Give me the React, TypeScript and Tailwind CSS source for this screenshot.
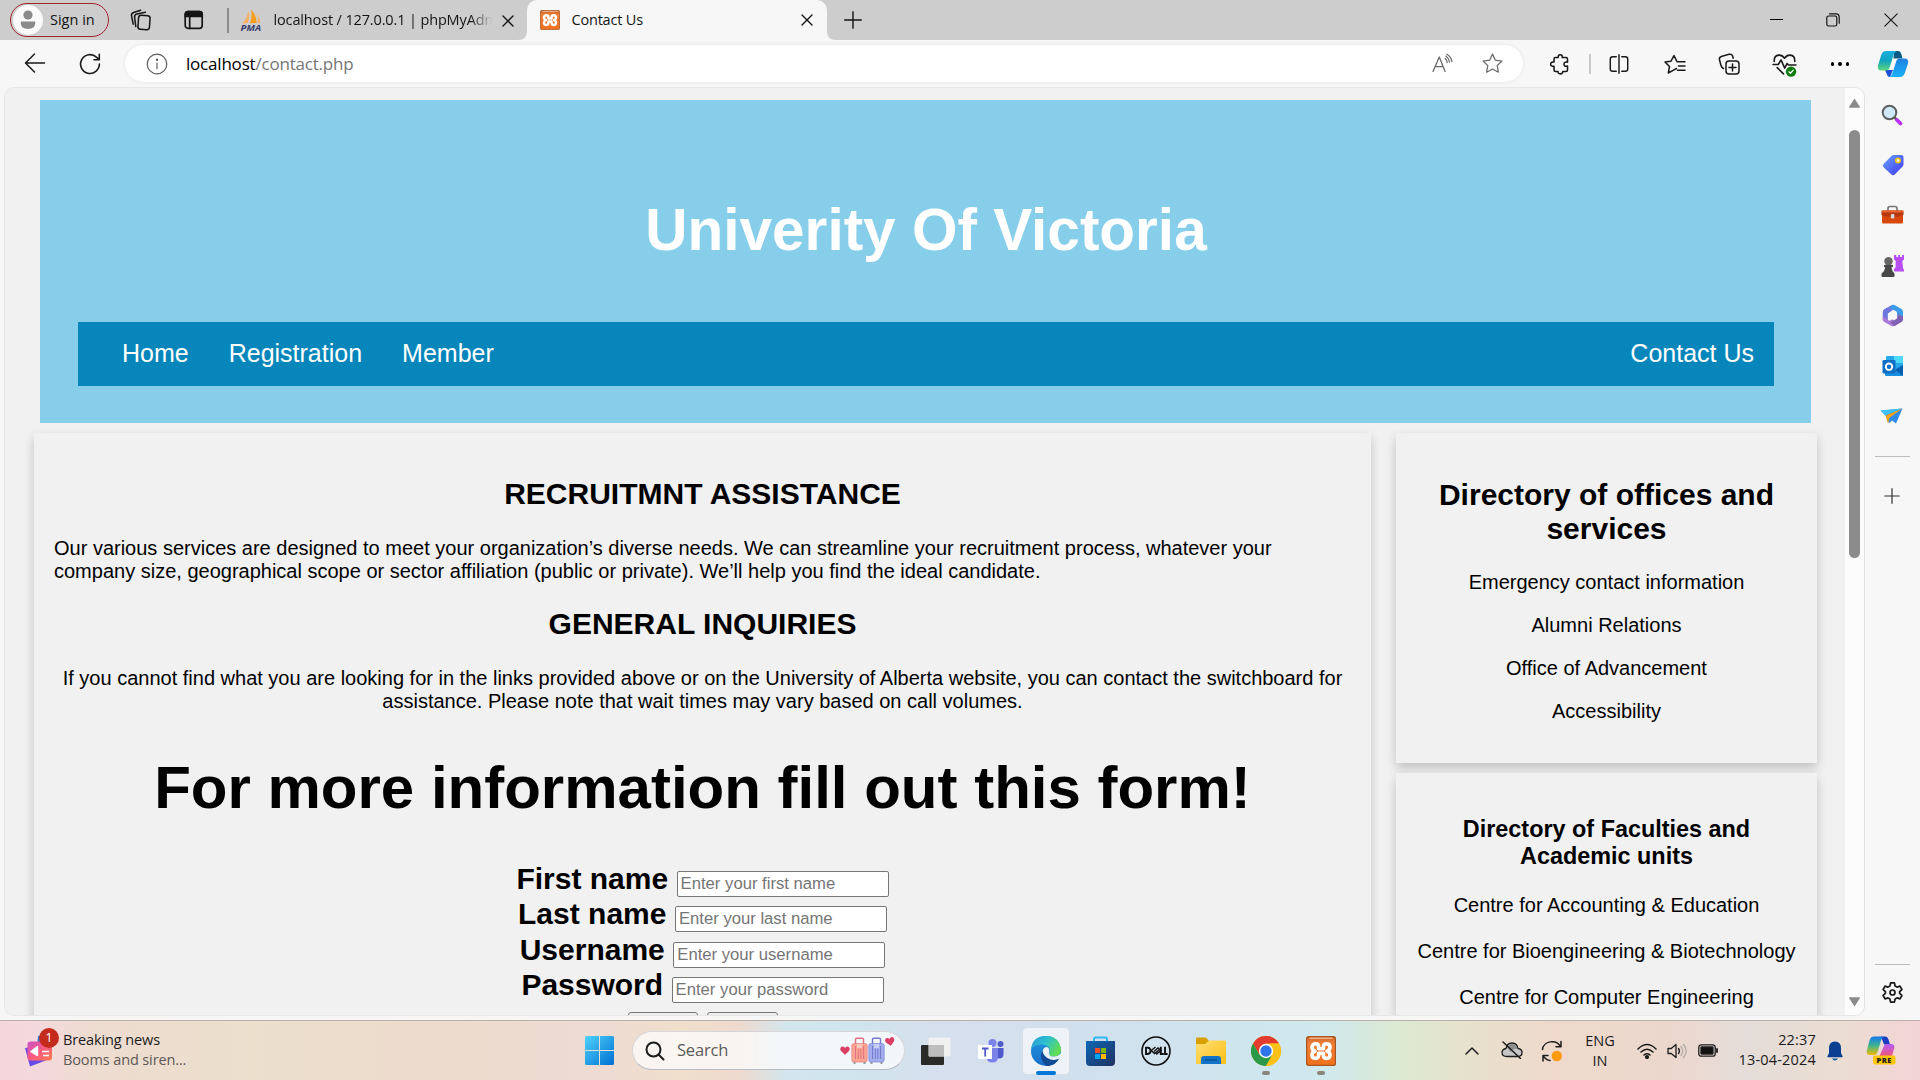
import React from "react";

const svgBase = { fill: "none", stroke: "currentColor", strokeLinecap: "round" as const, strokeLinejoin: "round" as const };

type SvgProps = { w?: number; h?: number; vb?: string; sw?: number; className?: string; children: React.ReactNode };
const Svg = ({ w = 24, h, vb = "0 0 24 24", sw = 1.3, className = "", children }: SvgProps) => (
  <svg width={w} height={h ?? w} viewBox={vb} {...svgBase} strokeWidth={sw} className={"block shrink-0 " + className}>
    {children}
  </svg>
);

const Xampp = ({ size }: { size: number }) => (
  <Svg w={size} vb="0 0 30 30">
    <defs>
      <linearGradient id="xa" x1="0" y1="0" x2="0" y2="1">
        <stop offset="0" stopColor="#c9662a" />
        <stop offset=".25" stopColor="#f08038" />
        <stop offset="1" stopColor="#f0701c" />
      </linearGradient>
    </defs>
    <rect x=".6" y=".6" width="28.8" height="28.8" rx="2" fill="url(#xa)" stroke="#a8551f" strokeWidth="1.2" />
    <path d="M4 2.2h22" stroke="#f2b08a" strokeWidth="1.4" />
    <path
      d="M12.6 11C12.600 8.500 11.500 7.800 9.800 7.800C7.300 7.800 6 9.200 6 11.300C6 13.300 7.200 14.500 9 15.200C7.200 15.800 6 17.200 6 19C6 21.200 7.600 22.400 9.600 22.400C11.600 22.400 12.600 21.300 12.600 19.200V17.300H17.400V19.200C17.400 21.300 18.400 22.400 20.400 22.400C22.400 22.400 24 21.200 24 19C24 17.200 22.800 15.800 21 15.200C22.800 14.500 24 13.300 24 11.300C24 9.200 22.700 7.800 20.200 7.800C18.500 7.800 17.400 8.500 17.400 11V12.800H12.600Z"
      stroke="#fff"
      strokeWidth="3.6"
    />
  </Svg>
);

const CloseX = ({ size = 12 }: { size?: number }) => (
  <Svg w={size} vb="0 0 12 12" sw={1.4}>
    <path d="M1 1l10 10M11 1L1 11" />
  </Svg>
);

function TabBar() {
  return (
    <div className="flex h-10 items-start bg-[#cdcdcd] text-[#151515]">
      <div className="mt-[3px] ml-[10px] flex h-[34px] w-[99px] items-center rounded-full border-[1.5px] border-[#a4262c] pl-[2px]">
        <span className="flex h-[30px] w-[30px] items-center justify-center rounded-full bg-[#fafafa]">
          <svg width="16" height="20" viewBox="0 0 16 20" fill="#8a8a8a">
            <circle cx="8" cy="5" r="4.6" />
            <path d="M.8 11.5h14.4v1.8c0 3.8-3 5.7-7.2 5.7s-7.2-1.9-7.2-5.7z" />
          </svg>
        </span>
        <span className="ml-[7px] text-[14.5px] whitespace-nowrap">Sign in</span>
      </div>
      <div className="ml-[20px] flex h-10 w-6 items-center justify-center">
        <Svg w={22} vb="0 0 22 22" sw={1.5}>
          <rect x="8.3" y="6.5" width="11.5" height="14" rx="2.6" transform="rotate(4 14 13)" />
          <path d="M5.8 17.6L4.6 8.3Q4.3 5.6 6.9 4.9L15.4 3.3" />
          <path d="M3.2 15.2L1.6 7.2Q1 4.4 3.6 3.5L10.6 1.2" />
        </Svg>
      </div>
      <div className="ml-[29px] flex h-10 w-6 items-center justify-center">
        <Svg w={20} vb="0 0 20 20" sw={1.7}>
          <rect x="1.2" y="1.7" width="17" height="16.6" rx="2.8" />
          <path d="M1.5 3.5Q2 1.7 4 1.7H15.4Q18 1.7 18.2 4V6.4H1.2Z" fill="currentColor" />
          <path d="M5.7 6v12" />
        </Svg>
      </div>
      <div className="mt-2 ml-[21px] h-[25px] w-[1.5px] bg-[#8a8a8a]" />
      <div className="ml-[11px] flex h-10 w-[22px] items-center justify-center">
        <svg width="22" height="22" viewBox="0 0 22 22" className="block">
          <path d="M9 1.5Q10 8 8 14L2.5 14.5Q7 9 9 1.5Z" fill="#f9b062" />
          <path d="M11 0.5Q17 7 16.5 14L10 14.3Q12.5 8 11 .5Z" fill="#f89c1d" />
          <path d="M17 5Q20.5 10 20 14L17.4 14Q18.6 9 17 5Z" fill="#f9b062" />
          <text x="0.5" y="21.5" fontSize="8.6" fontWeight="700" fontStyle="italic" fill="#3a3f6e" textLength="20.5" lengthAdjust="spacingAndGlyphs" fontFamily="Open Sans">PMA</text>
        </svg>
      </div>
      <div className="ml-[12px] flex h-10 w-[218px] items-center overflow-hidden [mask-image:linear-gradient(90deg,#000_90%,transparent_100%)]">
        <span className="text-[14.5px] tracking-[-0.14px] whitespace-nowrap">localhost / 127.0.0.1 | phpMyAdmin</span>
      </div>
      <div className="ml-[10px] flex h-[41px] w-3 items-center"><CloseX /></div>
      <div className="flex h-10 w-[13px] items-end justify-end">
        <svg width="9" height="9" viewBox="0 0 9 9" className="block"><path d="M9 0V9H0Q9 9 9 0Z" fill="#f7f7f7" /></svg>
      </div>
      <div className="flex h-10 w-[300px] items-center rounded-t-[10px] bg-[#f7f7f7] pl-[13px]">
        <Xampp size={20} />
        <span className="ml-[12px] w-[229px] text-[14.5px] tracking-[-0.2px]">Contact Us</span>
        <CloseX />
      </div>
      <div className="flex h-10 w-[9px] items-end">
        <svg width="9" height="9" viewBox="0 0 9 9" className="block"><path d="M0 0V9H9Q0 9 0 0Z" fill="#f7f7f7" /></svg>
      </div>
      <div className="ml-[8px] flex h-10 w-[18px] items-center">
        <Svg w={18} vb="0 0 18 18" sw={1.4}><path d="M9 .7v16.6M.7 9h16.6" /></Svg>
      </div>
      <div className="ml-auto flex h-[39px] items-center">
        <div className="mr-[43px] h-[1.3px] w-[13px] bg-black" />
        <div className="mr-[44px]">
          <Svg w={14} vb="0 0 14 14" sw={1.2}>
            <rect x=".8" y="3" width="10" height="10" rx="1.8" />
            <path d="M3.5.8H10Q13.2.8 13.2 4v6.2" />
          </Svg>
        </div>
        <div className="mr-[22px]"><Svg w={14} vb="0 0 14 14" sw={1.1}><path d="M.8.8l12.4 12.4M13.2.8L.8 13.2" /></Svg></div>
      </div>
    </div>
  );
}

const STAR = "M12 2.2l3 6.3 6.9.9-5 4.8 1.2 6.9L12 17.8l-6.1 3.3 1.2-6.9-5-4.8 6.9-.9z";

function AddressBar() {
  return (
    <div className="flex h-[47px] shrink-0 items-start bg-[#f7f7f7] text-[#1a1a1a]">
      <div className="flex h-[48px] w-[125px] items-center pl-[24px]">
        <Svg w={22} vb="0 0 22 22" sw={1.5} className="-translate-y-px"><path d="M20.5 11H1.6M10.5 2L1.5 11l9 9" /></Svg>
        <Svg w={22} vb="0 0 22 22" sw={1.6} className="ml-[33px]">
          <path d="M20.4 11A9.4 9.4 0 1 1 17.4 4.2L20 6.5M20.3 1.4v5.3h-5.4" />
        </Svg>
      </div>
      <div className="mt-[5px] flex h-[37px] w-[1398px] items-center rounded-full bg-white pl-[21px] shadow-[0_0_4px_rgba(0,0,0,0.08)]">
        <Svg w={22} vb="0 0 22 22" sw={1.2} className="text-[#5c5c5c]">
          <circle cx="11" cy="11" r="9.8" /><path d="M11 10v5.6" /><circle cx="11" cy="6.8" r=".6" fill="currentColor" />
        </Svg>
        <span className="ml-[18px] text-[17px] tracking-[-0.2px] text-black">localhost<span className="text-[#767676]">/contact.php</span></span>
        <div className="ml-auto flex items-center text-[#6a6a6a]">
          <Svg w={22} vb="0 0 22 22" sw={1.3} className="mr-[28px]">
            <path d="M2 18.5L8.3 4l5.8 14.5M4.2 13.6h7.900" />
            <path d="M14.200 5.400Q15.900 6.800 16.200 9.500M15 3.200Q17.900 5 18.500 9M15.800 1.200Q20.200 3.600 20.900 8.500" />
          </Svg>
          <Svg w={23} className="mr-[19px]"><path d={STAR} /></Svg>
        </div>
      </div>
      <div className="flex h-[48px] flex-1 items-center">
        <Svg w={22} className="ml-[26px]" sw={1.7}>
          <path d="M8 5H10.2Q9.600 2 12.300 2T14.400 5H18.500Q20.200 5 20.200 6.700V10Q16.300 9.300 16.300 12.200T20.200 14.300V18.500Q20.200 20.200 18.500 20.200H15Q15 22.800 12.400 22.800T9.800 20.200H7Q5.500 20.200 5.500 18.500V14.600Q1.800 14.800 1.800 12.200T5.500 9.700V6.700Q5.500 5 7 5Z" />
        </Svg>
        <div className="ml-[18px] h-[20px] w-[1.5px] bg-[#c8c8c8]" />
        <Svg w={22} className="ml-[17px]" sw={1.6}>
          <path d="M9 4H5Q2.500 4 2.500 6.500v11Q2.500 20 5 20h4M15 4h4Q21.500 4 21.500 6.500v11Q21.500 20 19 20h-4M12 2v20" />
        </Svg>
        <Svg w={24} className="ml-[33px]" sw={1.5}>
          <path d="M13.500 16.500L11 17.800 5.300 21 6.500 14.500 2 10 8 9.200 11 3.500 13.600 8.800M14 9.800h8M15.500 14h6.500M14.500 18.200H22" />
        </Svg>
        <Svg w={24} className="ml-[30px]" sw={1.5}>
          <rect x="9" y="9" width="13" height="13" rx="3" /><path d="M15.500 12v7M12 15.500h7M6.500 16.500Q4.600 15.800 4 13.500L2.500 8Q1.800 5.300 4.300 4.500L12 2.300Q14.800 1.700 15.600 4L16.200 6.200" />
        </Svg>
        <Svg w={25} className="ml-[31px]" sw={1.5}>
          <path d="M2.200 9Q1.700 3.500 6.500 3 9.800 2.800 12 6 14.200 2.800 17.500 3 22.300 3.500 21.800 9M1 12H6l2.700-4.500 3.500 8L14.500 11l1.300 1.500H23M5 15l6 6" />
          <circle cx="18.300" cy="18.800" r="5" fill="#107c10" stroke="none" /><path d="M16.200 19l1.500 1.400 2.700-3" stroke="#fff" strokeWidth="1.200" />
        </Svg>
        <div className="ml-[34px] flex gap-[4px]">
          <i className="h-[3.500px] w-[3.500px] rounded-full bg-black" /><i className="h-[3.500px] w-[3.500px] rounded-full bg-black" /><i className="h-[3.500px] w-[3.500px] rounded-full bg-black" />
        </div>
        <svg width="32" height="28" viewBox="0 0 32 28" className="ml-[28px] block shrink-0">
          <defs>
            <linearGradient id="c1" x1="0" y1="0" x2="0" y2="1"><stop offset="0" stopColor="#1aaede" /><stop offset=".5" stopColor="#12a5c0" /><stop offset="1" stopColor="#5cd67a" /></linearGradient>
            <linearGradient id="c2" x1="0" y1="0" x2="0" y2="1"><stop offset="0" stopColor="#1f7fe0" /><stop offset="1" stopColor="#18b2f7" /></linearGradient>
          </defs>
          <path d="M17 1h4q2.500 0 3.300 3l1.200 4.500h-9z" fill="#0b5c86" />
          <path d="M8 20h8l-3 7q-2.500 0-3.200-3z" fill="#1b4fd8" />
          <path d="M9 1H19.500Q17.500 2 16.500 5L12.500 18Q11.500 20.500 9 20.500H4.500Q0 20.500 1 15.500L4.200 5Q5.500 1 9 1Z" fill="url(#c1)" />
          <path d="M23 27H12.500Q14.500 26 15.500 23L19.500 10.500Q20.500 8.500 23 8.500H27.500Q32 8.500 31 13.500L27.800 23Q26.500 27 23 27Z" fill="url(#c2)" />
        </svg>
      </div>
    </div>
  );
}

const Cell = ({ children }: { children: React.ReactNode }) => (
  <div className="flex h-[50.200px] w-full shrink-0 items-center justify-center">{children}</div>
);

function EdgeSidebar() {
  return (
    <div className="flex w-[55px] shrink-0 flex-col items-center bg-[#f7f7f7] pt-[3px]">
      <Cell>
        <svg width="22" height="22" viewBox="0 0 22 22" className="-translate-x-px"><path d="M13 13l3 3" stroke="#555" strokeWidth="2.500" /><path d="M16 16l3.500 3.500" stroke="#b830f0" strokeWidth="3.800" strokeLinecap="round" /><circle cx="8.500" cy="8.500" r="6.800" fill="#cfe9fb" stroke="#5e5e5e" strokeWidth="2" /></svg>
      </Cell>
      <Cell>
        <svg width="22" height="22" viewBox="0 0 22 22"><defs><linearGradient id="tg" x1="0" y1="0" x2="1" y2="1"><stop offset="0" stopColor="#6aa5fb" /><stop offset="1" stopColor="#3d35f0" /></linearGradient></defs><path d="M12 1h7.500Q21.500 1 21.500 3v7q0 1.500-1 2.500l-7.800 8q-1.700 1.500-3.300 0L1.500 13.300q-1.300-1.600 0-3.200L9.500 2q1-1 2.500-1z" fill="url(#tg)" /><circle cx="16" cy="6.500" r="2.200" fill="#fff" stroke="#f2c31a" strokeWidth="1.700" /></svg>
      </Cell>
      <Cell>
        <svg width="23" height="20" viewBox="0 0 23 20"><path d="M7 6V3.200Q7 1.500 9 1.500h5q2 0 2 1.700V6" fill="none" stroke="#777" strokeWidth="1.700" /><rect x="1" y="9" width="21" height="9.500" rx="1.500" fill="#d8480c" /><path d="M1.500 5.500h20q1 0 1 1V10q-5 2-11 2t-11-2V6.500q0-1 1-1z" fill="#b5370c" /><rect x="0.500" y="5.500" width="22" height="2" rx="1" fill="#e8622a" /><rect x="9.800" y="9" width="3.600" height="4.600" rx="1" fill="#d5d5d5" /></svg>
      </Cell>
      <Cell>
        <svg width="23" height="24" viewBox="0 0 23 24"><path d="M13 1h2.200v2h2V1h1.800v2h2V1H23v4.500l-1.700 1.500.7 7 1 2v1.500h-9.500L13 17V15l1.500-1.500.3-6.500L13 5.500z" fill="#b84cf5" /><circle cx="7.500" cy="7.300" r="4.200" fill="#666" /><path d="M3 11h9v1.800l-1.600.8Q10.800 17 13.500 19.500V22q0 1-1 1h-11q-1 0-1-1v-2.500Q4 17 4.200 13.600L3 12.800z" fill="#484848" /></svg>
      </Cell>
      <Cell>
        <svg width="22" height="23" viewBox="0 0 22 23"><path d="M10 1L2.500 5Q.8 6 .8 8v8l5 2V9.500L13 4.500Z" fill="#6d78dc" /><path d="M.8 12v3.500q0 1.500 1.200 2.300l7.500 4.300q1.500.8 3 0l3-1.800-4.500-5-4 1.500Z" fill="#a978d8" /><path d="M10 1q1.500-.6 3 .2l6.500 3.800q1.500 1 1.500 2.800V13l-5.500-2-1-3.500L8 4Z" fill="#3b9be8" /><path d="M15.500 10L21 12.500v3q0 1.500-1.500 2.500l-7 4-4-3.500 6.500-4Z" fill="#8060b0" /><circle cx="11" cy="11.500" r="3.800" fill="#f7f7f7" /></svg>
      </Cell>
      <Cell>
        <svg width="22" height="22" viewBox="0 0 22 22"><rect x="4" y="1" width="17" height="13" rx="1.200" fill="#28a8ea" /><rect x="12" y="1" width="9" height="7" fill="#50d9ff" /><path d="M3 10l9 5 9-5v10q0 1-1 1H4q-1 0-1-1z" fill="#1490df" /><path d="M13 15l8-5v11z" fill="#0a60b0" /><rect x="0.500" y="5" width="13" height="13.500" rx="1.200" fill="#0f6fc6" /><circle cx="7" cy="11.700" r="3.200" fill="none" stroke="#fff" strokeWidth="1.900" /></svg>
      </Cell>
      <Cell>
        <svg width="23" height="19" viewBox="0 0 23 19" className="translate-x-[-1px]"><path d="M.8 3.500L22.500 1.500 16 16.500l-4-3-3 2.800-3-7z" fill="#2e8bea" /><path d="M.8 3.500L22.500 1.500 5.500 8.500z" fill="#3cc0f8" /><path d="M5.500 8.500L22.500 1.500 9.500 10.800 8 16.800z" fill="#f0a01a" /></svg>
      </Cell>
      <div className="mt-[15px] h-px w-[35px] bg-[#bdbdbd]" />
      <Svg w={16} vb="0 0 16 16" sw={1.200} className="mt-[31px] -translate-x-px text-[#333]"><path d="M8 .7v14.600M.7 8h14.600" /></Svg>
      <div className="mt-auto h-px w-[35px] bg-[#bdbdbd]" />
      <Svg w={23} sw={1.800} className="mt-[16px] mb-[16px] text-[#1a1a1a]">
        <path d="M10 2h4l.7 3.200 2 1.200 3.100-1 2 3.500-2.400 2.200v1.800l2.400 2.200-2 3.500-3.100-1-2 1.200L14 22h-4l-.7-3.200-2-1.200-3.100 1-2-3.500 2.400-2.200v-1.800L2.200 8.900l2-3.500 3.100 1 2-1.200z" /><circle cx="12" cy="12" r="2.600" />
      </Svg>
    </div>
  );
}

const fields = [
  ["First name", "Enter your first name"],
  ["Last name", "Enter your last name"],
  ["Username", "Enter your username"],
  ["Password", "Enter your password"],
];

const CARD = "bg-[#f1f1f1] shadow-[0_5px_10px_0_rgba(0,0,0,0.2)]";

function WebPage() {
  return (
    <div className="flex-1 overflow-hidden bg-[#f1f1f1] font-['Liberation_Sans',Arial,sans-serif] text-[20px] leading-[23px] text-black">
      <header className="mt-[12px] ml-[35px] flex h-[323px] w-[1771px] flex-col bg-[#87ceeb] pr-[37px] pl-[38px] pt-[96px]">
        <h1 className="text-center text-[58.500px] leading-[67px] font-bold text-white">Univerity Of Victoria</h1>
        <nav className="mt-[59px] flex h-[64px] items-center gap-[40px] bg-[#0786bb] pr-[20px] pb-[2px] pl-[44px] text-[25px] text-white">
          <a>Home</a>
          <a>Registration</a>
          <a>Member</a>
          <a className="ml-auto">Contact Us</a>
        </nav>
      </header>
      <div className="mt-[10px] ml-[29px] flex items-start gap-[25px]">
        <main className={`h-[800px] w-[1337px] px-[20px] pt-[44px] ${CARD}`}>
          <h2 className="text-center text-[30px] leading-[34px] font-bold">RECRUITMNT ASSISTANCE</h2>
          <p className="mt-[26px]">
            Our various services are designed to meet your organization’s diverse needs. We can streamline your recruitment process, whatever your company size, geographical scope or sector affiliation (public or private). We’ll help you find the ideal candidate.
          </p>
          <h2 className="mt-[24px] text-center text-[30px] leading-[34px] font-bold">GENERAL INQUIRIES</h2>
          <p className="mt-[26px] text-center">
            If you cannot find what you are looking for in the links provided above or on the University of Alberta website, you can contact the switchboard for assistance. Please note that wait times may vary based on call volumes.
          </p>
          <h1 className="mt-[40px] text-center text-[60px] leading-[69px] font-bold">For more information fill out this form!</h1>
          <form className="mt-[40px]">
            {fields.map(([label, hint]) => (
              <div key={label} className="flex h-[35.300px] items-baseline justify-center gap-[8.500px] text-[30px] leading-[34px] font-bold">
                <label>{label}</label>
                <input
                  placeholder={hint}
                  className="h-[26px] w-[212px] rounded-[2px] border border-[#767676] bg-white px-[3px] text-[16.670px] leading-[20px] font-normal placeholder:text-[#757575]"
                />
              </div>
            ))}
            <div className="mt-[9px] flex justify-center gap-[9px]">
              <button type="button" className="h-[27px] w-[70px] rounded-[3px] border border-[#767676] bg-[#efefef]" />
              <button type="button" className="h-[27px] w-[71px] rounded-[3px] border border-[#767676] bg-[#efefef]" />
            </div>
          </form>
        </main>
        <aside className="flex w-[421px] flex-col gap-[10px] text-center">
          <section className={`h-[330px] px-[20px] pt-[45px] ${CARD}`}>
            <h2 className="text-[30px] leading-[34px] font-bold">Directory of offices and services</h2>
            <div className="mt-[25px] flex flex-col gap-[20px]">
              <p>Emergency contact information</p>
              <p>Alumni Relations</p>
              <p>Office of Advancement</p>
              <p>Accessibility</p>
            </div>
          </section>
          <section className={`h-[500px] px-[20px] pt-[43px] ${CARD}`}>
            <h3 className="text-[23.400px] leading-[27px] font-bold">Directory of Faculties and Academic units</h3>
            <div className="mt-[24px] flex flex-col gap-[23px]">
              <p>Centre for Accounting &amp; Education</p>
              <p className="whitespace-nowrap">Centre for Bioengineering &amp; Biotechnology</p>
              <p>Centre for Computer Engineering</p>
            </div>
          </section>
        </aside>
      </div>
    </div>
  );
}

function PageScrollbar() {
  return (
    <div className="flex w-[19px] shrink-0 flex-col items-center bg-[#fcfcfc]">
      <svg width="13" height="10" viewBox="0 0 13 10" className="mt-[10px] block"><path d="M6.500.5l5.500 8.500q.2.800-1 .8H2q-1.200 0-1-.8z" fill="#8b8b8b" /></svg>
      <div className="mt-[22px] h-[428px] w-[11px] rounded-full bg-[#8b8b8b]" />
      <svg width="13" height="10" viewBox="0 0 13 10" className="mt-auto mb-[8px] block"><path d="M6.500 9.500L12 1q.2-.8-1-.8H2q-1.200 0-1 .8z" fill="#8b8b8b" /></svg>
    </div>
  );
}

function CopilotPre() {
  return (
    <svg width="30" height="29" viewBox="0 0 30 29" className="block">
      <defs>
        <linearGradient id="p1" x1="0" y1="0" x2="0" y2="1"><stop offset="0" stopColor="#1478f0" /><stop offset=".5" stopColor="#3fb58a" /><stop offset="1" stopColor="#f5b800" /></linearGradient>
        <linearGradient id="p2" x1="0" y1="0" x2="0" y2="1"><stop offset="0" stopColor="#b45cf5" /><stop offset="1" stopColor="#f2577f" /></linearGradient>
      </defs>
      <path d="M15 .5h4q2.500 0 3.500 3l1.500 5h-6z" fill="#1b3fc0" />
      <path d="M8 .5h9.500Q16 1.500 15 4.500L11.500 16Q10.500 19 8 19H4Q-.3 19 1 14L3.500 4.500Q4.700.5 8 .5Z" fill="url(#p1)" />
      <path d="M13.500 20L17.500 11Q18.500 8 21 8H25Q29 8 28.300 12L26 20Z" fill="url(#p2)" />
      <rect x="7" y="19.500" width="22.500" height="9" rx="2" fill="#fcc60b" />
      <text x="18.200" y="27" fontSize="7.500" fontWeight="800" textAnchor="middle" fill="#1a1a1a" fontFamily="Open Sans" letterSpacing=".5">PRE</text>
    </svg>
  );
}

const TaskCell = ({ children, dot = false }: { children: React.ReactNode; dot?: boolean }) => (
  <div className="relative flex h-[48px] w-[55px] shrink-0 items-center justify-center">
    {children}
    {dot && <i className="absolute bottom-0 h-[4px] w-[8px] rounded-full bg-[#8a857b]" />}
  </div>
);

const Suitcase = ({ color, dark }: { color: string; dark: string }) => (
  <svg width="17" height="27" viewBox="0 0 17 27" className="block">
    <path d="M4.500 7V2.500q0-1.300 1.300-1.300h5.400q1.300 0 1.300 1.300V7" fill="none" stroke={dark} strokeWidth="1.400" />
    <rect x=".8" y="6.500" width="15.400" height="18.500" rx="2" fill={color} stroke={dark} strokeWidth=".6" />
    <path d="M4.500 9v13M7.300 12v10M9.900 12v10M12.600 9v13" stroke={dark} strokeWidth="1" />
    <rect x="6" y="7" width="5" height="4" fill="#fff" opacity=".4" />
    <path d="M3.500 25.500v1M13.500 25.500v1" stroke="#444" strokeWidth="2" />
  </svg>
);

const Heart = ({ className = "" }: { className?: string }) => (
  <svg width="10" height="9" viewBox="0 0 10 9" className={"block " + className}><path d="M5 8.800L1 5Q-.5 3 1 1.200 3-.5 5 2 7-.5 9 1.200 10.500 3 9 5Z" fill="#dc3d62" /></svg>
);

function Taskbar() {
  return (
    <div className="flex h-[60px] shrink-0 items-center border-t border-[#b9b0aa] bg-[linear-gradient(90deg,#f5d6dc_0%,#f4d9dc_2%,#eddcd0_5%,#ecdfcc_13%,#eddccd_22%,#eedbd3_31%,#efdfcc_35.500%,#eedacf_38.500%,#d3e6ee_41%,#d0e5ee_44.500%,#d6dfed_49%,#d1e0ee_57%,#cfe6ee_65%,#cfe9ed_69%,#dde9d2_73%,#e8e0cc_77%,#eed9cc_81%,#ecd7cd_87%,#e5ddd9_91%,#ebddd1_96%,#f3d3d6_100%)] text-[#1c1c1c]">
      <div className="flex w-[584px] items-center pl-[25px]">
        <div className="relative">
          <svg width="30" height="36" viewBox="0 0 30 36" className="block">
            <defs><linearGradient id="nw" x1="0" y1="0" x2="1" y2="1"><stop offset="0" stopColor="#c850c8" /><stop offset=".5" stopColor="#fa5a80" /><stop offset="1" stopColor="#ff7a50" /></linearGradient></defs>
            <path d="M13 3l9-2v14l-10-1z" fill="#2a82d8" /><path d="M0 15l19-3 3 15-17 6.500z" fill="#6a4be8" />
            <rect x="2.500" y="8.500" width="24.500" height="19" rx="3" fill="url(#nw)" />
            <path d="M6 18.500l6.500-5v9z" fill="#fff" stroke="#fff" strokeWidth="1.500" strokeLinejoin="round" /><path d="M17 18.500h7M18 22.500h6" stroke="#fff" strokeWidth="1.600" />
          </svg>
          <span className="absolute -top-[5px] left-[14px] flex h-[20px] w-[20px] items-center justify-center rounded-full bg-[#c42b1c] text-[13px] text-white">1</span>
        </div>
        <div className="ml-[8px] -translate-y-px text-[14.500px] leading-[20px] tracking-[-0.120px] whitespace-nowrap">
          <div>Breaking news</div>
          <div className="text-[#5d5855]">Booms and siren...</div>
        </div>
      </div>
      <svg width="29" height="29" viewBox="0 0 29 29" className="ml-px block shrink-0">
        <defs><linearGradient id="wn" x1="0" y1="0" x2="1" y2="1"><stop offset="0" stopColor="#4ed2fb" /><stop offset="1" stopColor="#0070d2" /></linearGradient></defs>
        <path d="M1.500 0H14v14H0V1.500Q0 0 1.500 0zM15 0h12.500Q29 0 29 1.500V14H15zM0 15h14v14H1.500Q0 29 0 27.500zM15 15h14v12.500q0 1.500-1.500 1.500H15z" fill="url(#wn)" />
      </svg>
      <div className="ml-[18px] flex h-[39px] w-[273px] shrink-0 items-center rounded-full border border-b-[#b8bcc4] border-[#d8d5d8] bg-white/70 pl-[12px]">
        <Svg w={20} vb="0 0 20 20" sw={2}><circle cx="8.500" cy="8.500" r="7" /><path d="M13.500 13.500l5 5" /></Svg>
        <span className="ml-[12px] text-[16.500px] tracking-[-0.200px] text-[#5b5b5b]">Search</span>
        <div className="mr-[9px] ml-auto flex items-center">
          <Heart className="mr-px" /><Suitcase color="#f9a592" dark="#e0707f" /><Suitcase color="#a3aeef" dark="#7478cc" /><Heart className="-translate-y-[9px] -rotate-12" />
        </div>
      </div>
      <div className="ml-[3px] flex">
        <TaskCell>
          <svg width="30" height="28" viewBox="0 0 30 28"><rect x="0" y="8" width="23" height="20" rx="1" fill="#2a2a28" /><rect x="7.500" y=".5" width="22" height="19" rx="1" fill="#f0f0f0" /><rect x="8" y="8" width="15" height="11.500" fill="#bdbdbd" /></svg>
        </TaskCell>
        <TaskCell>
          <svg width="28" height="24" viewBox="0 0 28 24"><circle cx="23.500" cy="5" r="3" fill="#5059c9" /><circle cx="15.500" cy="4" r="4" fill="#7b83eb" /><path d="M18 9h8.500v6q0 4.500-4.500 4.500t-4-4z" fill="#5059c9" /><path d="M9 9h12v9q0 5.500-5.500 5.500T9 18z" fill="#7b83eb" /><rect x="1" y="6" width="14" height="14" fill="#fff" /><path d="M5 9.500h6.500M8.200 9.500v8" stroke="#5059c9" strokeWidth="1.800" /></svg>
        </TaskCell>
        <div className="relative mx-[3.500px] flex h-[48px] w-[48px] items-center justify-center rounded-[5px] border border-[#d5dfe8] bg-white/60">
          <svg width="30" height="30" viewBox="0 0 30 30">
            <defs>
              <linearGradient id="e1" x1="0" y1="0" x2="1" y2=".5"><stop offset="0" stopColor="#2795d8" /><stop offset=".5" stopColor="#2cc0d0" /><stop offset="1" stopColor="#62dc55" /></linearGradient>
              <linearGradient id="e2" x1="0" y1="0" x2="0" y2="1"><stop offset="0" stopColor="#2296e0" /><stop offset="1" stopColor="#1670c8" /></linearGradient>
            </defs>
            <circle cx="15" cy="15" r="15" fill="url(#e2)" />
            <path d="M.3 12Q2 0 15 0Q28 0 30 13Q30.500 21 21.500 20.500Q17 20 18.300 17Q20 13 17 10.500Q10 6 .3 12Z" fill="url(#e1)" />
            <path d="M11.500 14Q7 23 15.500 30Q24 30.500 28.500 22Q22 25 16.500 22Q11.500 19 11.500 14Z" fill="#134a94" />
            <path d="M11.600 15Q12.500 11 16 11Q19 12 18.200 16.500Q17.500 20 21.500 20.500Q27 21 30.500 17L30 23L28.500 22.500Q22 25.500 16.500 22Q12 19 11.600 15Z" fill="#e9f2fa" />
          </svg>
          <i className="absolute -bottom-px h-[4px] w-[20px] rounded-full bg-[#0078d7]" />
        </div>
        <TaskCell>
          <svg width="29" height="30" viewBox="0 0 29 30"><defs><linearGradient id="st" x1="0" y1="0" x2="1" y2="1"><stop offset="0" stopColor="#0d68b5" /><stop offset="1" stopColor="#1f3060" /></linearGradient></defs><path d="M8 6V3q0-1.500 1.500-1.500h10Q21 1.500 21 3v3" fill="none" stroke="#2fb8f0" strokeWidth="2" /><path d="M0 5h29v21q0 4-4 4H4q-4 0-4-4z" fill="url(#st)" /><path d="M9 12h5v5H9z" fill="#f25022" /><path d="M15 12h5v5h-5z" fill="#7fba00" /><path d="M9 18h5v5H9z" fill="#00a4ef" /><path d="M15 18h5v5h-5z" fill="#ffb900" /></svg>
        </TaskCell>
        <TaskCell>
          <Svg w={30} vb="0 0 30 30" sw={1.600}><circle cx="15" cy="15" r="14" stroke="#111" /><g stroke="#111" strokeWidth="1.900" strokeLinecap="butt" strokeLinejoin="miter"><path d="M5 11.600h1.600q3 .2 3 3.200t-3 3.200H5z" /><path d="M14.500 11l-4.200 3.500 3.200 3 4.500-3.500M13 15.500l4-3.500 3 2.600-5 3.800" strokeWidth="1.400" /><path d="M19.800 10.800v7.200h3M24 10.800v7.200h2.600" /></g></Svg>
        </TaskCell>
        <TaskCell>
          <svg width="30" height="27" viewBox="0 0 30 27"><defs><linearGradient id="fo" x1="0" y1="0" x2="1" y2="1"><stop offset="0" stopColor="#ffdf76" /><stop offset="1" stopColor="#fcbf15" /></linearGradient></defs><path d="M0 1.500Q0 .5 1 .5h9L13 4v6H0z" fill="#d9a004" /><path d="M0 7h9l4-3.500h16q1 0 1 1V26q0 1-1 1H1q-1 0-1-1z" fill="url(#fo)" /><path d="M5 27v-5q0-3 3-3h14q3 0 3 3v5z" fill="#1273c8" /><path d="M9 23h12" stroke="#0b4c8c" strokeWidth="1.200" /></svg>
        </TaskCell>
        <TaskCell dot>
          <svg width="30" height="30" viewBox="0 0 30 30"><circle cx="15" cy="15" r="15" fill="#fbc116" /><path d="M2 7.500A15 15 0 0 1 28 7.500H15V15L8.500 18.800Z" fill="#e33b2e" /><path d="M2 7.500A15 15 0 0 0 15 30l6.500-11.200H8.500Z" fill="#2a9a48" /><path d="M28 7.500A15 15 0 0 1 15 30L21.500 18.500 19 7.500Z" fill="#fbc116" /><circle cx="15" cy="15" r="7.200" fill="#fff" /><circle cx="15" cy="15" r="5.700" fill="#2f74ea" /></svg>
        </TaskCell>
        <TaskCell dot><Xampp size={30} /></TaskCell>
      </div>
      <div className="ml-auto flex items-center">
        <Svg w={14} vb="0 0 14 10" sw={1.500} h={10}><path d="M1 8l6-6 6 6" /></Svg>
        <Svg w={22} vb="0 0 22 18" h={18} sw={1.300} className="ml-[22px] -translate-y-px"><path d="M6 15.500Q1 15.500 1 11.500 1.300 8 5 7.500 6 2 11 2t6 5.500Q21 8 21 11.500q0 4-4.500 4z" fill="#c6c6c6" /><path d="M6 7Q7.500 3 11 3t5.500 5Q12 7 9.500 11 7 7 6 7z" fill="#8d8d8d" stroke="none" /><path d="M2 1l17.500 16.500" strokeWidth="1.500" /></Svg>
        <Svg w={22} sw={1.500} vb="0 0 22 22" className="ml-[18px]"><path d="M1.500 9.500A9.500 8.500 0 0 1 19.500 6.500M20 1.500v5.200h-5M2 21v-5.500h5M2.200 15.800Q5 20 9 20.600" /><circle cx="15.800" cy="16" r="5.200" fill="#ff9a0a" stroke="none" /></Svg>
        <div className="ml-[20px] w-[34px] text-center text-[14.500px] leading-[20px]">ENG<br />IN</div>
        <Svg w={20} vb="0 0 20 16" h={16} sw={1.600} className="ml-[20px]"><path d="M1 6Q10-3 19 6M4 9q6-5.500 12 0M7 12q3-2.500 6 0" /><circle cx="10" cy="14" r="1.300" fill="currentColor" /></Svg>
        <Svg w={21} vb="0 0 21 16" h={16} sw={1.300} className="ml-[10px]"><path d="M1 5.500h3.200L9 1.500v13l-4.800-4H1z" /><path d="M11.500 5.500q2 2.500 0 5" /><path d="M14 3.500q3.500 4.500 0 9M16.500 1.500q5.500 6.500 0 13" className="text-[#b0aca8]" stroke="currentColor" /></Svg>
        <Svg w={20} vb="0 0 20 13" h={13} sw={1.300} className="ml-[10px]"><rect x=".8" y=".8" width="16.400" height="11.400" rx="2.500" /><rect x="3" y="3" width="12" height="7" rx=".5" fill="#111" /><path d="M19 5v3" strokeWidth="1.800" /></Svg>
        <div className="ml-[10px] w-[88px] -translate-y-px text-right text-[14.500px] leading-[20px] tracking-[0.180px] whitespace-nowrap">22:37<br />13-04-2024</div>
        <svg width="16" height="20" viewBox="0 0 16 20" className="ml-[11px] block"><path d="M8 .5Q14 .8 14 7v5l1.700 3.500q0 .8-.8.8H1.100q-.8 0-.8-.8L2 12V7Q2 .8 8 .5z" fill="#0b3f91" /><path d="M5 17.500h6q-1 2-3 2t-3-2z" fill="#0b5cad" /></svg>
        <div className="mr-[24px] ml-[23px]"><CopilotPre /></div>
      </div>
    </div>
  );
}

export default function App() {
  return (
    <div className="flex h-[1080px] w-[1920px] flex-col overflow-hidden bg-[#f7f7f7] font-['Open_Sans','Noto_Sans',sans-serif]">
      <TabBar />
      <AddressBar />
      <div className="flex min-h-0 flex-1">
        <div className="mb-[4px] ml-[4px] flex w-[1862px] overflow-hidden rounded-[10px] border border-r-[#e2e2e2] border-[#e6e6e6]">
          <WebPage />
          <PageScrollbar />
        </div>
        <EdgeSidebar />
      </div>
      <Taskbar />
    </div>
  );
}
